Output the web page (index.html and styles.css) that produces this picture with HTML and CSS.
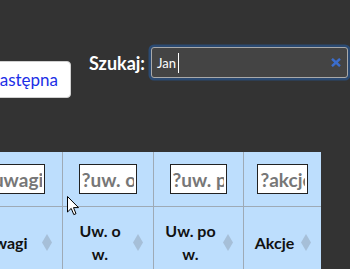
FILE: index.html
```html
<!DOCTYPE html>
<html lang="pl">
<head>
<meta charset="utf-8">
<title>Tabela</title>
<link rel="stylesheet" href="styles.css">
</head>
<body>
<div class="page">
  <div class="toolbar">
    <button class="pager-btn" type="button">Następna</button>
    <div class="search">
      <label class="search-label">Szukaj:</label>
      <div class="search-box">
        <span class="search-text">Jan</span><span class="caret"></span>
        <svg class="clear-icon" width="10" height="9" viewBox="0 0 10 9"><path d="M1 0.8 L9 8.2 M9 0.8 L1 8.2" stroke="#3b6dcc" stroke-width="2.4" stroke-linecap="butt"/></svg>
      </div>
    </div>
  </div>

  <table class="grid">
    <colgroup>
      <col class="c1"><col class="c2"><col class="c3"><col class="c4">
    </colgroup>
    <thead>
      <tr class="filters">
        <th><input class="filter" type="text" placeholder="?uwagi"></th>
        <th><input class="filter" type="text" placeholder="?uw. o w."></th>
        <th><input class="filter" type="text" placeholder="?uw. po w."></th>
        <th><input class="filter" type="text" placeholder="?akcje"></th>
      </tr>
      <tr class="heads">
        <th><div class="head"><span class="label">Uwagi</span><svg class="sort" width="10" height="17" viewBox="0 0 10 17"><polygon points="5,0 10,8.5 5,17 0,8.5"/></svg></div></th>
        <th><div class="head"><span class="label">Uw. o<br>w.</span><svg class="sort" width="10" height="17" viewBox="0 0 10 17"><polygon points="5,0 10,8.5 5,17 0,8.5"/></svg></div></th>
        <th><div class="head"><span class="label">Uw. po<br>w.</span><svg class="sort" width="10" height="17" viewBox="0 0 10 17"><polygon points="5,0 10,8.5 5,17 0,8.5"/></svg></div></th>
        <th><div class="head"><span class="label">Akcje</span><svg class="sort" width="10" height="17" viewBox="0 0 10 17"><polygon points="5,0 10,8.5 5,17 0,8.5"/></svg></div></th>
      </tr>
    </thead>
  </table>

  <svg class="mouse" width="13" height="20" viewBox="0 0 13 20"><path d="M0.5 0.5 L0.5 16 L4.2 12.4 L6.8 18.6 L9 17.7 L6.5 11.6 L11.5 11.6 Z" fill="#fff" stroke="#000" stroke-width="1" stroke-linejoin="miter"/></svg>
</div>
</body>
</html>
```
FILE: styles.css
```css
html, body {
  margin: 0;
  padding: 0;
}
body {
  background: #333333;
  width: 350px;
  height: 269px;
  overflow: hidden;
  font-family: Lato, "Open Sans", sans-serif;
}
.page {
  position: relative;
  width: 350px;
  height: 269px;
  overflow: hidden;
}
.toolbar {
  display: flex;
  align-items: flex-start;
  padding-top: 47px;
}
.pager-btn {
  margin-top: 14px;
  margin-left: -26px;
  height: 37px;
  padding: 0 12px;
  background: #ffffff;
  border: 1px solid #d0d0d0;
  border-radius: 4px;
  color: #1b2fe6;
  font-family: Lato, "Open Sans", sans-serif;
  font-size: 17px;
  flex: none;
}
.search {
  display: flex;
  align-items: center;
  margin-left: 18px;
  flex: none;
}
.search-label {
  color: #ffffff;
  font-weight: bold;
  font-size: 18px;
  margin-right: 6px;
}
.search-box {
  box-sizing: border-box;
  width: 197px;
  height: 31px;
  background: #444444;
  border: 1px solid #a9a9a9;
  border-radius: 3px;
  box-shadow: 0 0 0 2.5px #2b4a72;
  display: flex;
  align-items: center;
  padding-left: 5px;
  padding-right: 6px;
}
.search-text {
  color: #ffffff;
  font-size: 13px;
}
.caret {
  display: inline-block;
  width: 1px;
  height: 20px;
  background: #ffffff;
  margin-left: 2px;
}
.clear-icon {
  margin-left: auto;
}
.grid {
  margin-top: 54px;
  margin-left: -36px;
  width: 357px;
  table-layout: fixed;
  border-collapse: separate;
  border-spacing: 0;
  background: #bddefd;
}
.c1 { width: 98px; }
.c2 { width: 91px; }
.c3 { width: 90px; }
.c4 { width: 78px; }
.grid th {
  border-left: 1px solid #9eaab6;
  padding: 0;
  color: #111111;
}
.grid th:first-child {
  border-left: none;
}
.filters th {
  border-bottom: 1px solid #9eaab6;
  padding: 12px 0;
  text-align: center;
}
.filter {
  box-sizing: border-box;
  width: 65%;
  height: 30px;
  margin: 0;
  padding: 0 2px;
  border: 1px solid #222222;
  border-radius: 0;
  background: #ffffff;
  font-family: Lato, "Open Sans", sans-serif;
  font-weight: bold;
  font-size: 19px;
  color: #222;
  display: block;
  margin-left: auto;
  margin-right: auto;
}
.filter::placeholder {
  color: #777777;
}
.heads th {
  padding: 12px 10px 12px 8px;
}
.head {
  display: flex;
  align-items: center;
  gap: 4px;
}
.label {
  flex: 1;
  text-align: center;
  font-size: 16px;
  font-weight: bold;
  line-height: 23px;
}
.sort {
  flex: none;
  fill: #a6bfd8;
}
.mouse {
  position: absolute;
  left: 67px;
  top: 196px;
}
```
